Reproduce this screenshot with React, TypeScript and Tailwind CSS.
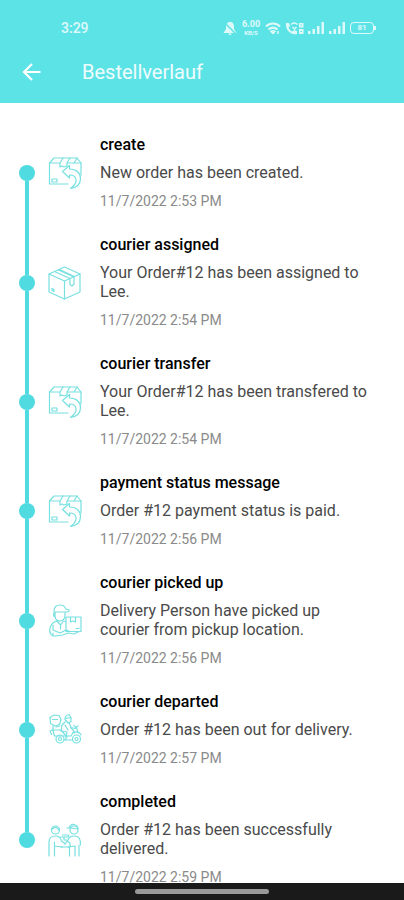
import type { ReactNode } from 'react';

type IconName = 'return' | 'box' | 'courier' | 'scooter' | 'handover';

interface OrderEvent {
	id: number;
	title: string;
	message: string;
	date: string;
	icon: IconName;
}

const events: OrderEvent[] = [
	{ id: 1, title: 'create', message: 'New order has been created.', date: '11/7/2022 2:53 PM', icon: 'return' },
	{ id: 2, title: 'courier assigned', message: 'Your Order#12 has been assigned to Lee.', date: '11/7/2022 2:54 PM', icon: 'box' },
	{ id: 3, title: 'courier transfer', message: 'Your Order#12 has been transfered to Lee.', date: '11/7/2022 2:54 PM', icon: 'return' },
	{ id: 4, title: 'payment status message', message: 'Order #12 payment status is paid.', date: '11/7/2022 2:56 PM', icon: 'return' },
	{ id: 5, title: 'courier picked up', message: 'Delivery Person have picked up courier from pickup location.', date: '11/7/2022 2:56 PM', icon: 'courier' },
	{ id: 6, title: 'courier departed', message: 'Order #12 has been out for delivery.', date: '11/7/2022 2:57 PM', icon: 'scooter' },
	{ id: 7, title: 'completed', message: 'Order #12 has been successfully delivered.', date: '11/7/2022 2:59 PM', icon: 'handover' },
];

const drawings: Record<IconName, ReactNode> = {
	return: (
		<>
			<path d="M20 28H1.500V7L6 2h23l4 5v12" />
			<path d="M1.500 7H12M20 7h13M15 2l-3 5v4l2-1 2 1 3-1V7l3-5M29 2l-3 5" />
			<path d="M4 23h5v3H4z" />
			<path d="m14.500 15.500 7-6v3.500c7 0 11 4 11 9.500S29 31.500 22.500 32.500c4-3 6-6 5.500-9s-2.500-4.500-6.500-4.500v3z" />
		</>
	),
	box: (
		<>
			<path d="M16.500 1 32 8v18l-15.500 7L1 26V8z" />
			<path d="m1 8 15.500 7L32 8M16.500 15v18" />
			<path d="m6.500 5.500 15.500 7v6l2 1.500 2-2v-7l-15.500-7M11.500 3.500l15 7" />
			<path d="M4 22.500v2l2 1v-2z" />
		</>
	),
	courier: (
		<>
			<path d="M6 7c0-4 2.500-6 6-6 3 0 5 1.500 6 4l3 1c.5 1-.5 2-2 2H8l-2 2z" />
			<path d="M7 10v2c0 3 2 5 5 5s5-2.500 5-5V8.500M6 10c-1 1 0 3 1.500 3" />
			<path d="M9 17c-4 1-6 3-7 7-1 5 1 8 5 8l8-1 5-2 6 1 4-2" />
			<path d="M9 17l3.500 4 3-4 2 .5M5 21v5l7 3 6-3 4 1.500M12.500 21v4M5 32v-3" />
			<path d="M18 13h15v14.500H18zM22.500 13v5l2.500-1 2.500 1v-5M28 24.500h3" />
		</>
	),
	scooter: (
		<>
			<path d="M2 4.500 6 2l5 .5 2 4-1.500 5L7 13l-4.500-2.500zM4.500 6.500h5M5 13v4l-3 1 1.500 3.500" />
			<path d="M17 6.500c0-3 2-4.500 4-5l2 3v4l-3 1.500zM17 5.500l6-1" />
			<path d="M17 9l-3 3-1 6 6 1-1 5M21 9.500l2 5 4 1 3-2.500M12 13l-4 1" />
			<path d="M4 17h9l5 6h5l3-5-3-3M5 17.500 6.500 23M26 12.500l3 3 .500 4M17 12l3 5" />
			<path d="M7 23h12c0 2-1 3-2 4M26 20c2-2 6-1 7 2" />
			<circle cx="12" cy="26" r="4" />
			<circle cx="12" cy="26" r="1.500" />
			<circle cx="28.500" cy="26" r="4" />
			<circle cx="28.500" cy="26" r="1.500" />
			<path d="M17 27h7.500" />
		</>
	),
	handover: (
		<>
			<circle cx="7.500" cy="7" r="4" />
			<path d="M3.500 6c2-1 4-2 5-1.500L11 7M1 33V19c0-4 2-6 6.500-6 3 0 5 1.500 6 5l4 3M6.500 19v14M6.500 23l8 1" />
			<circle cx="26" cy="7" r="4" />
			<path d="M21 5c1-2.500 3-4 5-3.500S30 3.500 30 6l-8-1h-3M32.500 22c0-6-1-9-6.500-9-3 0-5 1-6 4l-3 4M31 22v11M27 23v10M21.500 24v9M27 23l-7 1" />
			<path d="M12.500 14h8v-2h-6M13 24h9v-4l-3-2M16 14v3h3" />
		</>
	),
};

function EventIcon({ name }: { name: IconName }) {
	return (
		<svg
			viewBox="0 0 34 34"
			className="size-[34px] shrink-0 fill-none stroke-[#78e0e0]"
			strokeWidth="1.200"
			strokeLinejoin="round"
			strokeLinecap="round"
			aria-hidden="true"
		>
			{drawings[name]}
		</svg>
	);
}

function SignalIcon() {
	return (
		<svg viewBox="0 0 17 12" className="h-3 w-[17px] fill-current" aria-hidden="true">
			<path d="M0 9h2.500v3H0zM4.500 7H7v5H4.500zM9 4h2.500v8H9zM13.500 0H16v12h-2.500z" />
		</svg>
	);
}

function StatusBar() {
	return (
		<div className="flex h-14 items-center justify-between pr-7 pl-[61px] text-white/80">
			<span className="text-sm font-medium">3:29</span>
			<div className="flex items-center gap-1">
				<svg viewBox="0 0 14 14" className="size-[14px] fill-current" aria-hidden="true">
					<path d="M7 1c3 0 4 2 4 5v2l2.500 4H.5L3 8V5c0-2 2-4 4-4zM5.500 12.500h3c0 2-3 2-3 0z" />
					<path d="m1 1 12 12" className="stroke-[#5ce3e6]" strokeWidth="1.500" />
				</svg>
				<div className="flex w-5 flex-col items-center font-bold">
					<span className="text-[9px] leading-[10px]">6.00</span>
					<span className="text-[6px] leading-[8px]">KB/S</span>
				</div>
				<svg viewBox="0 0 16 13" className="h-[13px] w-4 fill-none stroke-current" strokeWidth="2" aria-hidden="true">
					<path d="M1 4.500c4-4 10-4 14 0M3.500 7.500c3-2.500 6-2.500 9 0" />
					<path d="M6 9.500c1-1 3-1 4 0l-2 2zM13 9v3" strokeWidth="1.500" />
				</svg>
				<svg viewBox="0 0 19 13" className="h-[13px] w-[19px] fill-current" aria-hidden="true">
					<path d="M1 1h3l1 3-1.500 1.500C4.500 8 6 9 7.500 9.500L9 8l3 1v3C6 13.500 0 8 1 1z" />
					<path d="M6 2.500c2-2 4.500-2 6.500 0M7.500 5l2 2 2-2" className="fill-none stroke-current" strokeWidth="1.500" />
					<path d="M14 1h4.500v4.500H14zM14 7h4.500v5H14z" />
					<path d="M15.500 3h1.500M15.500 9.500h1.500" className="stroke-[#5ce3e6]" />
				</svg>
				<SignalIcon />
				<SignalIcon />
				<div className="flex items-center">
					<span className="flex h-3 w-6 items-center justify-center rounded-sm border border-current text-[8px] font-bold">
						81
					</span>
					<span className="h-1 w-0.5 bg-current" />
				</div>
			</div>
		</div>
	);
}

function Header() {
	return (
		<header className="shrink-0 bg-[#5ce3e6]">
			<StatusBar />
			<div className="flex items-center gap-[38px] px-5 pb-[15px]">
				<button type="button" aria-label="Zurück" className="text-white">
					<svg
						viewBox="0 0 24 24"
						className="size-6 fill-none stroke-current"
						strokeWidth="2.200"
						aria-hidden="true"
					>
						<path d="M20.500 12H4M12 4l-8 8 8 8" />
					</svg>
				</button>
				<h1 className="text-xl leading-8 text-white/90">Bestellverlauf</h1>
			</div>
		</header>
	);
}

function TimelineItem({ event, first, last }: { event: OrderEvent; first: boolean; last: boolean }) {
	return (
		<li className="flex items-center">
			<div className="flex w-4 flex-col items-center self-stretch">
				<span className={first ? 'flex-1' : 'w-1 flex-1 bg-[#4fdbe0]'} />
				<span className="size-4 rounded-full bg-[#4fdbe0]" />
				<span className={last ? 'flex-1' : 'w-1 flex-1 bg-[#4fdbe0]'} />
			</div>
			<div className="flex flex-1 items-center gap-[18px] py-3 pl-[13px]">
				<EventIcon name={event.icon} />
				<div className="min-w-0 flex-1">
					<h2 className="text-base leading-5 font-medium text-black">{event.title}</h2>
					<p className="mt-2 text-base leading-[19px] text-[#4a4a4a]">{event.message}</p>
					<p className="mt-[9px] text-sm leading-5 text-[#8a8a8a]">{event.date}</p>
				</div>
			</div>
		</li>
	);
}

function App() {
	return (
		<div className="flex h-screen flex-col bg-white font-[Roboto,sans-serif]">
			<Header />
			<main className="min-h-0 flex-1 overflow-y-auto pt-5 pr-8 pl-[19px] [scrollbar-width:none]">
				<ol>
					{events.map((event, index) => (
						<TimelineItem
							key={event.id}
							event={event}
							first={index === 0}
							last={index === events.length - 1}
						/>
					))}
				</ol>
			</main>
			<div className="flex h-[17px] shrink-0 items-center justify-center bg-[#1a1a1a]">
				<span className="h-[5px] w-1/3 rounded-full bg-[#999999]" />
			</div>
		</div>
	);
}

export default App;
